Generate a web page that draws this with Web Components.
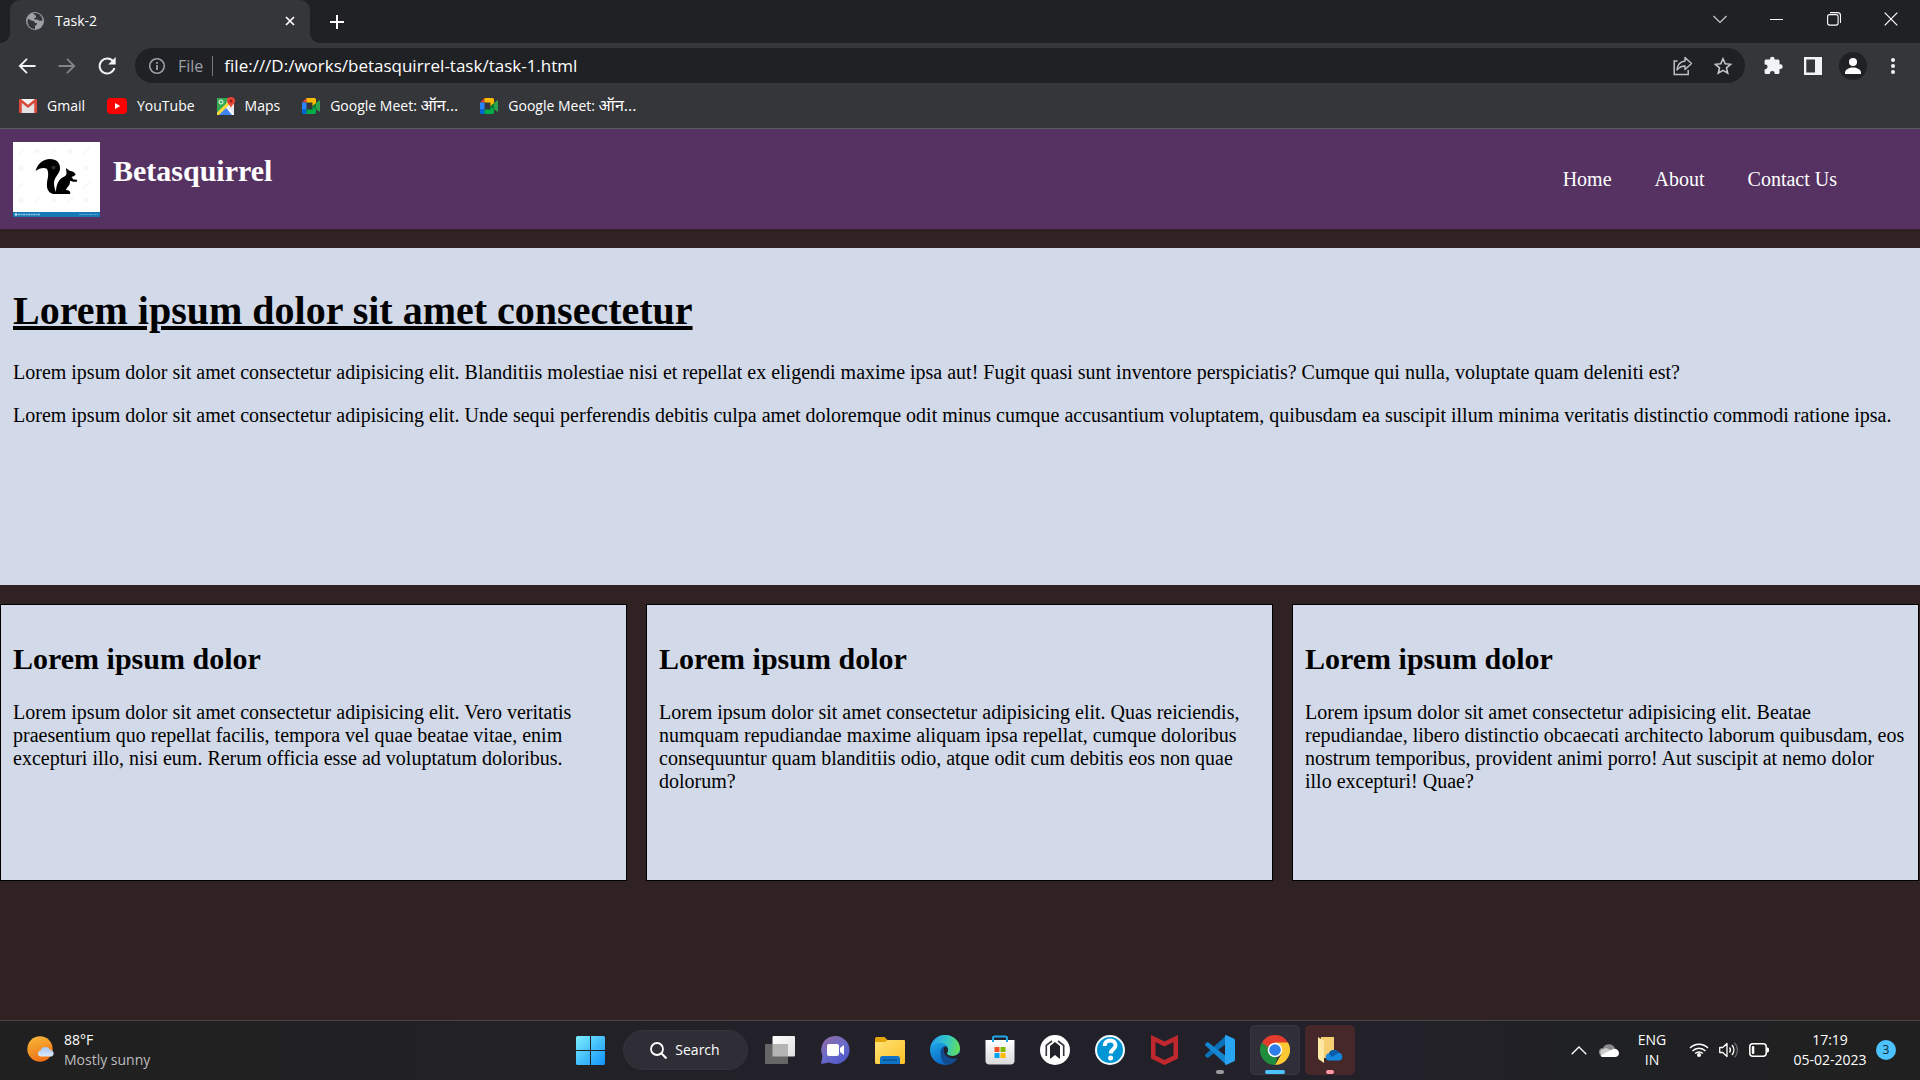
<!DOCTYPE html>
<html lang="en">
<head>
<meta charset="utf-8">
<title>Task-2</title>
<style>
  html, body { margin: 0; }
  body {
    min-height: 100vh;
    display: flex;
    flex-direction: column;
    background: #302222;
    color: #000;
    font: 20px/23px "Liberation Serif", "Times New Roman", serif;
    --ui: "Open Sans", "Noto Sans", sans-serif;
  }
  site-main { flex: 1; }
  [lang="hi"] { font-size: 16px; }
</style>
</head>
<body>
<browser-chrome>
  <browser-tab slot="tab">Task-2</browser-tab>
  <bookmark-link slot="bookmarks" icon="gmail">Gmail</bookmark-link>
  <bookmark-link slot="bookmarks" icon="youtube">YouTube</bookmark-link>
  <bookmark-link slot="bookmarks" icon="maps">Maps</bookmark-link>
  <bookmark-link slot="bookmarks" icon="meet">Google Meet: <span lang="hi">ऑन...</span></bookmark-link>
  <bookmark-link slot="bookmarks" icon="meet">Google Meet: <span lang="hi">ऑन...</span></bookmark-link>
</browser-chrome>
<site-header>Betasquirrel
  <nav-link slot="nav">Home</nav-link>
  <nav-link slot="nav">About</nav-link>
  <nav-link slot="nav">Contact Us</nav-link>
</site-header>
<site-main>
  <hero-panel slot="hero">
    <span slot="title">Lorem ipsum dolor sit amet consectetur</span>
    <p>Lorem ipsum dolor sit amet consectetur adipisicing elit. Blanditiis molestiae nisi et repellat ex eligendi maxime ipsa aut! Fugit quasi sunt inventore perspiciatis? Cumque qui nulla, voluptate quam deleniti est?</p>
    <p>Lorem ipsum dolor sit amet consectetur adipisicing elit. Unde sequi perferendis debitis culpa amet doloremque odit minus cumque accusantium voluptatem, quibusdam ea suscipit illum minima veritatis distinctio commodi ratione ipsa.</p>
  </hero-panel>
  <info-card><span slot="title">Lorem ipsum dolor</span>Lorem ipsum dolor sit amet consectetur adipisicing elit. Vero veritatis praesentium quo repellat facilis, tempora vel quae beatae vitae, enim excepturi illo, nisi eum. Rerum officia esse ad voluptatum doloribus.</info-card>
  <info-card><span slot="title">Lorem ipsum dolor</span>Lorem ipsum dolor sit amet consectetur adipisicing elit. Quas reiciendis, numquam repudiandae maxime aliquam ipsa repellat, cumque doloribus consequuntur quam blanditiis odio, atque odit cum debitis eos non quae dolorum?</info-card>
  <info-card><span slot="title">Lorem ipsum dolor</span>Lorem ipsum dolor sit amet consectetur adipisicing elit. Beatae repudiandae, libero distinctio obcaecati architecto laborum quibusdam, eos nostrum temporibus, provident animi porro! Aut suscipit at nemo dolor illo excepturi! Quae?</info-card>
</site-main>
<task-bar>
  <weather-widget slot="start"><span slot="temp">88°F</span>Mostly sunny</weather-widget>
  <task-button icon="windows" label="Start"></task-button>
  <search-pill>Search</search-pill>
  <task-button icon="taskview" label="Task view"></task-button>
  <task-button icon="chat" label="Chat"></task-button>
  <task-button icon="explorer" label="File Explorer"></task-button>
  <task-button icon="edge" label="Edge"></task-button>
  <task-button icon="store" label="Store"></task-button>
  <task-button icon="support" label="Support"></task-button>
  <task-button icon="help" label="Help"></task-button>
  <task-button icon="mcafee" label="McAfee"></task-button>
  <task-button icon="vscode" label="Code" state="running"></task-button>
  <task-button icon="chrome" label="Chrome" state="active"></task-button>
  <task-button icon="onedrive" label="OneDrive folder" state="alert"></task-button>
  <system-tray slot="end"></system-tray>
</task-bar>

<script>
const svg = (w, h, body, extra = '') =>
  `<svg width="${w}" height="${h}" viewBox="0 0 ${w} ${h}" fill="none" aria-hidden="true" ${extra}>${body}</svg>`;

const ICONS = {
  globe: svg(18, 18, '<circle cx="9" cy="9" r="9" fill="#9aa0a6"/><path d="M2 7c2 0 3 2 5 2s1 2 3 2 1 2-1 3v3C5 17 1.500 14 1.500 9z" fill="#35363a"/><path d="M7 1.500c1 1.500 3 1 3 3S8 6 8 7s3 0 4 1 3 1 4.500.5C16.500 4 13 1 9 1z" fill="#35363a"/>'),
  tabClose: svg(10, 10, '<path d="M1 1l8 8M9 1L1 9" stroke="#fff" stroke-width="1.700"/>'),
  plus: svg(14, 14, '<path d="M7 0v14M0 7h14" stroke="#fff" stroke-width="2"/>'),
  chevron: svg(14, 9, '<path d="M.5 1l6.500 6.500L13.500 1" stroke="#ccc" stroke-width="1.200"/>'),
  minimize: svg(13, 3, '<path d="M0 1.500h13" stroke="#fff"/>'),
  restore: svg(14, 14, '<rect x=".6" y="2.600" width="10.500" height="10.500" rx="2" stroke="#fff" stroke-width="1.100"/><path d="M3 .6h7.500a3 3 0 0 1 3 3V11" stroke="#fff" stroke-width="1.100"/>'),
  close: svg(14, 14, '<path d="M.7.7l12.600 12.600M13.300.7L.7 13.300" stroke="#fff" stroke-width="1.200"/>'),
  back: svg(18, 16, '<path d="M17.500 8H2M9 .8L1.800 8 9 15.200" stroke="#f1f3f4" stroke-width="1.800"/>'),
  forward: svg(18, 16, '<path d="M.5 8H16M9 .8L16.200 8 9 15.200" stroke="#838488" stroke-width="1.800"/>'),
  reload: svg(18, 18, '<path d="M15.300 4.700A7.500 7.500 0 1 0 16.400 11" stroke="#f1f3f4" stroke-width="2"/><path d="M17.700 0v7.500h-7.500z" fill="#f1f3f4"/>'),
  info: svg(18, 18, '<circle cx="9" cy="9" r="7.300" stroke="#9aa0a6" stroke-width="1.600"/><path d="M9 8v5M9 5v1.800" stroke="#9aa0a6" stroke-width="1.800"/>'),
  share: svg(20, 20, '<path d="M4.500 5H1.200v13.500h14V14" stroke="#bdc1c6" stroke-width="1.500"/><path d="M12 1.500l6.500 6-6.500 6v-3.500c-4 0-6 1.500-8 4 .5-5 3-8.500 8-9z" stroke="#bdc1c6" stroke-width="1.400" stroke-linejoin="round"/>'),
  star: svg(18, 18, '<path d="M9 1.800l2.200 5 5.400.5-4.100 3.600 1.200 5.300L9 13.400l-4.700 2.800 1.200-5.300L1.400 7.300l5.400-.5z" stroke="#c4c7cb" stroke-width="1.600"/>'),
  puzzle: svg(19, 19, '<path d="M6 3.500V3a2.300 2.300 0 0 1 4.600 0v.5h3.300c1 0 1.600.7 1.600 1.600v3.200h.8a2.400 2.400 0 0 1 0 4.800h-.8v3.300c0 .9-.7 1.600-1.600 1.600h-3.200v-.7a2.400 2.400 0 0 0-4.800 0v.7H2.200c-.9 0-1.600-.7-1.600-1.600v-3.200h.6a2.400 2.400 0 0 0 0-4.800H.6V5.100c0-.9.700-1.600 1.600-1.600z" fill="#f1f3f4"/>'),
  panel: svg(18, 18, '<path fill-rule="evenodd" d="M0 0h18v18H0zM2.300 2.500v13h8.700v-13z" fill="#f1f3f4"/>'),
  avatar: svg(28, 28, '<circle cx="14" cy="14" r="14" fill="#202124"/><circle cx="14" cy="10" r="4" fill="#fff"/><path d="M6 22v-1.500c0-3 4.500-5 8-5s8 2 8 5V22z" fill="#fff"/>'),
  dots: svg(4, 16, '<circle cx="2" cy="2" r="2" fill="#f1f3f4"/><circle cx="2" cy="8" r="2" fill="#f1f3f4"/><circle cx="2" cy="14" r="2" fill="#f1f3f4"/>'),

  gmail: svg(18, 18, '<path d="M1 2h16v14H1z" fill="#f2f2f2"/><path d="M3 16V6l6 5 6-5v10z" fill="#e3e3e3"/><path d="M0 3.200C0 2.500.6 2 1.300 2H2l7 5.700L16 2h.7c.7 0 1.300.5 1.300 1.200V15c0 .6-.4 1-1 1h-1.800V6L9 11 2.800 6v10H1c-.6 0-1-.4-1-1z" fill="#d94a3d"/>'),
  youtube: svg(20, 16, '<rect width="20" height="16" rx="4" fill="#f00"/><path d="M8 5l5.200 3L8 11z" fill="#fff"/>'),
  maps: svg(18, 18, '<rect y="1" width="17" height="17" rx="1" fill="#e8eaed"/><path d="M0 2a1 1 0 0 1 1-1h10L8.500 9 0 17z" fill="#34a853"/><path d="M9.500 9l7.500 8v1H0z" fill="#fff"/><path d="M8.500 10L1 18h14z" fill="#4285f4"/><path d="M0 15.500L12 4l2 2L2 18H0z" fill="#fbdc3e"/><circle cx="4" cy="5" r="2" stroke="#fff" stroke-width="1"/><path d="M14 0a4 4 0 0 1 4 4c0 2.700-3 3.500-4 7-1-3.500-4-4.300-4-7a4 4 0 0 1 4-4z" fill="#ea4335"/><circle cx="14" cy="4" r="1.500" fill="#8f1f18"/>'),
  meet: svg(18, 16, '<path d="M4.500 0v4.500H0z" fill="#ea4335"/><path d="M0 4.500h4.500v7H0z" fill="#2684fc"/><path d="M0 11.500h4.500V16H1.500A1.500 1.500 0 0 1 0 14.500z" fill="#0066da"/><path d="M4.500 0h8A1.500 1.500 0 0 1 14 1.500V6l-3.500 2.500v-4h-6z" fill="#ffba00"/><path d="M4.500 11.500h6v-3L14 11v3.500a1.500 1.500 0 0 1-1.500 1.500h-8z" fill="#00ac47"/><path d="M10.500 8L14 5v6z" fill="#00832d"/><path d="M14 5l3-2.500c.4-.3 1-.1 1 .5v10c0 .6-.6.8-1 .5L14 11z" fill="#2ba24c"/>'),

  squirrel: `<svg width="87" height="75" viewBox="0 0 87 75" role="img" aria-label="Betasquirrel logo"><rect width="87" height="75" fill="#fff"/>
    <g stroke="#f6f6f6" stroke-width="1.500"><path d="M5 12l7-6M37 12l7-6M70 12l7-6M5 46l7-6M70 46l7-6M21 61l7-6M54 61l7-6"/></g>
    <g fill="#f7f7f7"><circle cx="24" cy="9" r="2.500"/><circle cx="57" cy="9" r="2.500"/><circle cx="8" cy="26" r="2.500"/><circle cx="73" cy="26" r="2.500"/><circle cx="8" cy="58" r="2.500"/><circle cx="41" cy="58" r="2.500"/><circle cx="73" cy="58" r="2.500"/></g>
    <path d="M22.700 29C24 22 30 17 37 17c6.500 0 10.500 4 10 10-.4 5-6 8-6 14 0 3.500.8 6.300 2 9 0-6 2-12.500 7.500-15 2-1 3-2 3-4l-.5-5 3.500 2.700c3.200.3 5.500 1.800 6.200 4l-2.200 1.500-2 .8 2 2.500 3.800.3-.6 2h-3.500l-3.200-1c.3 3-1 5-3 7l-1 2.200c2 0 3.700.7 4.200 2v2H40c-5-1.500-6.500-5.500-6-11 .3-4 2.500-9 0-14-3-2-8-.5-11.300 2z" fill="#000"/><circle cx="40.500" cy="25.500" r="2" fill="#2c2c2c"/>
    <rect y="70" width="87" height="5" fill="#1579b5"/><circle cx="3" cy="72.500" r="1.300" fill="#cfe6f3"/><path d="M5 72.500h22" stroke="#8fc3df" stroke-width="1.500" stroke-dasharray="2 .5"/><path d="M66 72.500h19" stroke="#5ba5cd" stroke-dasharray="2 .5"/></svg>`,

  sun: svg(28, 28, '<defs><linearGradient id="s" x1="8" y1="0" x2="17" y2="26" gradientUnits="userSpaceOnUse"><stop stop-color="#f6b638"/><stop offset="1" stop-color="#ef6c13"/></linearGradient><linearGradient id="c" x1="0" y1="11" x2="0" y2="21" gradientUnits="userSpaceOnUse"><stop stop-color="#a9c8f5"/><stop offset="1" stop-color="#dce9fb"/></linearGradient></defs><circle cx="13" cy="13" r="12.700" fill="url(#s)"/><path d="M13.500 20.500a3.200 3.200 0 0 1 .2-6.300 5 5 0 0 1 9.300-.2 3.400 3.400 0 0 1 1.600 6.500z" fill="url(#c)"/>'),
  windows: svg(29, 29, '<defs><linearGradient id="w" x1="0" y1="0" x2="29" y2="29" gradientUnits="userSpaceOnUse"><stop stop-color="#7eefff"/><stop offset="1" stop-color="#0f92f8"/></linearGradient></defs><path d="M1.500 0H14v14H0V1.500A1.500 1.500 0 0 1 1.500 0zM15 0h12.500A1.500 1.500 0 0 1 29 1.500V14H15zM0 15h14v14H1.500A1.500 1.500 0 0 1 0 27.500zM15 15h14v12.500a1.500 1.500 0 0 1-1.500 1.500H15z" fill="url(#w)"/>'),
  search: svg(17, 17, '<circle cx="7" cy="7" r="6" stroke="#fff" stroke-width="1.800"/><path d="M11.500 11.500l5 5" stroke="#fff" stroke-width="2"/>'),
  taskview: svg(30, 28, '<defs><linearGradient id="t" x1="8" y1="0" x2="30" y2="20" gradientUnits="userSpaceOnUse"><stop stop-color="#fff"/><stop offset="1" stop-color="#dedede"/></linearGradient></defs><rect x="7.500" width="22.500" height="20.500" rx="1" fill="url(#t)"/><rect y="8" width="23" height="20" rx="1" fill="#666"/><path d="M7.500 8H22a1 1 0 0 1 1 1v11.500H7.500z" fill="#b4b4b4"/>'),
  chat: svg(30, 30, '<defs><linearGradient id="h" x1="5" y1="3" x2="22" y2="28" gradientUnits="userSpaceOnUse"><stop stop-color="#8f6aa8"/><stop offset=".5" stop-color="#6b6bc9"/><stop offset="1" stop-color="#5059c9"/></linearGradient></defs><path d="M15.500 1a14 14 0 1 1-6.300 26.500L1 29l1.500-8A14 14 0 0 1 15.500 1z" fill="url(#h)"/><rect x="7" y="9" width="12" height="12" rx="2" fill="#fff"/><path d="M20 13l4-3v10l-4-3z" fill="#fff"/>'),
  explorer: svg(30, 27, '<defs><linearGradient id="f" x1="5" y1="3" x2="25" y2="27" gradientUnits="userSpaceOnUse"><stop stop-color="#ffe06e"/><stop offset="1" stop-color="#fcc32e"/></linearGradient></defs><path d="M0 1.500A1.500 1.500 0 0 1 1.500 0h8L13 3.500V8H0z" fill="#e5a50a"/><path d="M0 5h10l2.500-2H29a1 1 0 0 1 1 1v21.500a1.500 1.500 0 0 1-1.500 1.500h-27A1.500 1.500 0 0 1 0 25.500z" fill="url(#f)"/><path d="M5 27v-5.500A2.500 2.500 0 0 1 7.500 19h15a2.500 2.500 0 0 1 2.500 2.500V27z" fill="#0f74c8"/><path d="M8 23h14" stroke="#064a85" stroke-width="1.200"/>'),
  edge: svg(30, 30, '<defs><linearGradient id="e1" x1="3" y1="8" x2="30" y2="14" gradientUnits="userSpaceOnUse"><stop stop-color="#27a5e8"/><stop offset=".5" stop-color="#36c8c4"/><stop offset="1" stop-color="#66e04f"/></linearGradient><linearGradient id="e2" x1="5" y1="9" x2="14" y2="30" gradientUnits="userSpaceOnUse"><stop stop-color="#1ba0e2"/><stop offset="1" stop-color="#0a64c4"/></linearGradient></defs><circle cx="15" cy="15" r="15" fill="url(#e2)"/><path d="M.5 12C2 5 8 0 15 0c9 0 15 6.500 15 13.500 0 4.500-3.500 7.500-7.500 7.500-3 0-5.500-1-5.500-2.500s1.300-2 1.300-4.200C18.300 11 14.500 8 10 8 5.500 8 2 9.500.5 12z" fill="url(#e1)"/><path d="M10.500 17c0-3.500 2.500-5.500 4.500-5.800-1 .8-1.500 2.200-1.500 3.800 0 5 5 8 9 8 2.500 0 4.300-.7 5.500-1.500C25.500 26.800 20.500 30 16 30c-3.500-2-5.500-8-5.500-13z" fill="#104c8f"/><path d="M18 15c0 2-1 2.500-1 3.500 0 1.500 2.500 2.500 5.500 2.500 3 0 5.500-1.300 7-3.500l.5 2.500-2 3c-7 2.500-14.500-2-14.500-8 0-1.500.7-3 1.500-3.800 1.700 0 3 1.800 3 3.800z" fill="#22212a"/>'),
  store: svg(30, 30, '<defs><linearGradient id="m" x1="0" y1="5" x2="0" y2="30" gradientUnits="userSpaceOnUse"><stop stop-color="#fff"/><stop offset="1" stop-color="#d9d9d9"/></linearGradient></defs><path d="M8 8V3a1.500 1.500 0 0 1 1.500-1.500h11A1.500 1.500 0 0 1 22 3v5" stroke="#20a9ea" stroke-width="2"/><path fill-rule="evenodd" d="M.5 5h29v20.500a4 4 0 0 1-4 4h-21a4 4 0 0 1-4-4z" fill="url(#m)"/><path d="M8 5v2M22 5v2" stroke="#20a9ea" stroke-width="2"/><path d="M9.500 12h5v5h-5z" fill="#f25022"/><path d="M15.500 12h5v5h-5z" fill="#7fba00"/><path d="M9.500 18h5v5h-5z" fill="#00a4ef"/><path d="M15.500 18h5v5h-5z" fill="#ffb900"/>'),
  support: svg(30, 30, '<circle cx="15" cy="15" r="15" fill="#fff"/><path d="M6.300 21V10.300L12 6M23.700 21V10.300L18 6" stroke="#33333a" stroke-width="1.600"/><path d="M10 24V11l5-4 5 4v13l-5-4z" fill="#22212a"/>'),
  help: svg(30, 30, '<circle cx="15" cy="15" r="14" fill="#0096d6" stroke="#f4fbff" stroke-width="2"/><path d="M9.700 11c0-3.400 2.300-5.500 5.400-5.500s5.400 2 5.400 4.800c0 4-4.700 4-4.700 8.200" stroke="#fff" stroke-width="4"/><circle cx="15.600" cy="23" r="2.500" fill="#fff"/>'),
  mcafee: svg(27, 30, '<path fill-rule="evenodd" d="M0 0l13.500 6.500L27 0v23.500L13.500 30 0 23.500zM4.500 7v13.500l9 4.500 9-4.500V7l-9 4.500z" fill="#c0282d"/>'),
  vscode: svg(30, 30, '<path d="M22 8L3.500 22.500c-.6.500-1.300.4-1.800 0L.4 21.200c-.5-.5-.5-1.300 0-1.800L21 .5z" fill="#0b70b8"/><path d="M22 22L3.500 7.500c-.6-.5-1.300-.4-1.800 0L.4 8.800c-.5.500-.5 1.300 0 1.800L21 29.500z" fill="#1685cf"/><path d="M21.500.2L28.700 3.500c.8.400 1.300 1.200 1.300 2v19c0 .8-.5 1.600-1.300 2l-7.200 3.300c-.7.300-1.500 0-1.500-.8V1c0-.8.800-1.100 1.500-.8z" fill="#27a5f2"/>'),
  chrome: svg(30, 30, '<path d="M15 15L2 7.500A15 15 0 0 1 28 7.500z" fill="#e33b2e"/><path d="M15 7.500h13A15 15 0 0 1 15 30l6.500-11.200z" fill="#fcc934"/><path d="M2 7.500l6.500 11.300 6.500 3.700 2.500 0L15 30A15 15 0 0 1 2 7.500z" fill="#1e8e3e"/><path d="M2 7.500h26l-13 0a7.500 7.500 0 0 0-6.500 11.300z" fill="#e33b2e"/><path d="M2 7.500l6.500 11.300L9 13z" fill="#1e8e3e"/><circle cx="15" cy="15" r="7.300" fill="#fff"/><circle cx="15" cy="15" r="5.800" fill="#2f7de9"/>'),
  onedrive: svg(26, 26, '<path d="M4 0h13v21H4z" fill="#f6cf72"/><path d="M1 0l6 4v22L2 22.500 1 21z" fill="#ffe7a6"/><path d="M11.500 23.500a3.500 3.500 0 0 1 .3-6.900 5.500 5.500 0 0 1 10-.8 4 4 0 0 1 1 7.700z" fill="#1287db"/><path d="M11.800 16.600a5.500 5.500 0 0 1 10-.8L15 20z" fill="#0b5cab"/>', 'overflow="visible"'),
  up: svg(16, 9, '<path d="M.7 8.300L8 1l7.300 7.300" stroke="#fff" stroke-width="1.300"/>'),
  cloud: svg(20, 13, '<path d="M4 12a4 4 0 0 1 0-8 6.500 6.500 0 0 1 12 .5A4 4 0 0 1 16.500 12z" fill="#8b8b8b"/><path d="M2 6l5-2 9 4-8 4H4a4 4 0 0 1-2-6z" fill="#ccc"/><path d="M1.500 11.500L13 5.500A4.500 4.500 0 0 1 20 9a4 4 0 0 1-3.500 4H4c-1.200 0-2-.5-2.500-1.500z" fill="#fff"/>'),
  wifi: svg(20, 16, '<circle cx="10" cy="13" r="2" fill="#fff"/><path d="M1 6a12.500 12.500 0 0 1 18 0M3.500 9a9 9 0 0 1 13 0M6.200 11.500a5.500 5.500 0 0 1 7.600 0" stroke="#fff" stroke-width="1.500"/>'),
  speaker: svg(20, 16, '<path d="M.7 5.500h3L8 1.500v13l-4.300-4h-3z" stroke="#fff" stroke-width="1.300" stroke-linejoin="round"/><path d="M10.500 5.500a4 4 0 0 1 0 5M13 3a7.500 7.500 0 0 1 0 10" stroke="#fff" stroke-width="1.300"/><path d="M15.500.7a10.500 10.500 0 0 1 0 14.600" stroke="#666" stroke-width="1.300"/>'),
  battery: svg(20, 14, '<rect x=".8" y=".8" width="16.400" height="12.400" rx="3" stroke="#fff" stroke-width="1.500"/><path d="M18 4.500c1.300 0 2 .6 2 1.500v2c0 .9-.7 1.500-2 1.500z" fill="#fff"/><rect x="2.800" y="3" width="2.500" height="8" rx="1" fill="#fff"/>')
};

const RESET = `
  button, input { all: unset; box-sizing: border-box; }
  a { color: inherit; text-decoration: none; }
  button { display: grid; place-items: center; cursor: default; }
  svg { display: block; }`;

function define(name, render) {
  customElements.define(name, class extends HTMLElement {
    constructor() {
      super();
      const t = document.createElement('template');
      t.innerHTML = `<style>${RESET}</style>` + render(this);
      this.attachShadow({ mode: 'open' }).append(t.content.cloneNode(true));
    }
  });
}

define('browser-chrome', () => `
  <style>
    :host { display: block; background: #35363a; border-bottom: 1px solid #5b5c60; font: 14px/20px var(--ui); color: #fff; }
    .strip { display: flex; align-items: stretch; height: 43px; background: #202124; padding-left: 10px; }
    .new { width: 54px; }
    .win { display: flex; margin-left: auto; padding: 0 1px 5px 0; }
    .win button { width: 57px; }
    .tools { display: flex; align-items: center; height: 45px; padding: 0 7px; }
    .nav { width: 40px; height: 40px; }
    .omni { flex: 1; display: flex; align-items: center; height: 35px; margin: 0 8px 0 8px; padding: 0 13px; border-radius: 18px; background: #202124; }
    .scheme { font-size: 16px; color: #9aa0a6; padding: 0 9px 0 12px; border-right: 1px solid #777a7e; }
    .omni input { flex: 1; margin-left: 11px; font-size: 17px; line-height: 24px; color: #fff; }
    .omni button { width: 40px; }
    .omni button:last-child { margin-right: -11px; }
    .ext { width: 40px; height: 36px; }
    .marks { display: flex; align-items: center; gap: 22px; height: 40px; box-sizing: border-box; padding: 0 19px 5px; }
  </style>
  <div class="strip">
    <slot name="tab"></slot>
    <button class="new" aria-label="New tab">${ICONS.plus}</button>
    <div class="win">
      <button aria-label="Search tabs">${ICONS.chevron}</button>
      <button aria-label="Minimize">${ICONS.minimize}</button>
      <button aria-label="Restore">${ICONS.restore}</button>
      <button aria-label="Close">${ICONS.close}</button>
    </div>
  </div>
  <div class="tools">
    <button class="nav" aria-label="Back">${ICONS.back}</button>
    <button class="nav" aria-label="Forward">${ICONS.forward}</button>
    <button class="nav" aria-label="Reload">${ICONS.reload}</button>
    <div class="omni">
      ${ICONS.info}
      <label class="scheme" for="url">File</label>
      <input id="url" type="text" value="file:///D:/works/betasquirrel-task/task-1.html">
      <button aria-label="Share">${ICONS.share}</button>
      <button aria-label="Bookmark">${ICONS.star}</button>
    </div>
    <button class="ext" aria-label="Extensions">${ICONS.puzzle}</button>
    <button class="ext" aria-label="Side panel">${ICONS.panel}</button>
    <button class="ext" aria-label="Profile">${ICONS.avatar}</button>
    <button class="ext" aria-label="Menu">${ICONS.dots}</button>
  </div>
  <div class="marks"><slot name="bookmarks"></slot></div>`);

define('browser-tab', () => `
  <style>
    :host { position: relative; display: flex; align-items: center; gap: 11px; box-sizing: border-box; width: 300px; padding: 0 15px 1px 16px; border-radius: 10px 10px 0 0; background: #35363a; }
    :host::before, :host::after { content: ""; position: absolute; bottom: 0; width: 10px; height: 10px; }
    :host::before { right: 100%; background: radial-gradient(circle at 0 0, transparent 10px, #35363a 10px); }
    :host::after { left: 100%; background: radial-gradient(circle at 100% 0, transparent 10px, #35363a 10px); }
    button { margin-left: auto; }
  </style>
  ${ICONS.globe}<span><slot></slot></span><button aria-label="Close tab">${ICONS.tabClose}</button>`);

define('bookmark-link', el => `
  <style>
    :host { display: block; }
    a { display: flex; align-items: center; gap: 10px; white-space: nowrap; }
  </style>
  <a href="#">${ICONS[el.getAttribute('icon')]}<span><slot></slot></span></a>`);

define('site-header', () => `
  <style>
    :host { display: flex; align-items: flex-start; gap: 13px; height: 100px; box-sizing: border-box; padding: 13px 83px 12px 13px; background: #553261; color: #fff; }
    h2 { margin: 12px 0 0; font-size: 30px; line-height: 34px; }
    nav { display: flex; align-self: center; gap: 43px; margin-left: auto; }
  </style>
  ${ICONS.squirrel}
  <h2><slot></slot></h2>
  <nav><slot name="nav"></slot></nav>`);

define('nav-link', () => `
  <style>:host { display: block; }</style>
  <a href="#"><slot></slot></a>`);

define('site-main', () => `
  <style>
    :host { display: block; padding-top: 19px; }
    .cards { display: grid; grid-template-columns: repeat(3, 1fr); gap: 19px; padding: 19px 1px 19px 0; }
  </style>
  <slot name="hero"></slot>
  <div class="cards"><slot></slot></div>`);

define('hero-panel', () => `
  <style>
    :host { display: flow-root; box-sizing: border-box; min-height: 337px; padding: 13px; background: #d2d9e8; }
    h1 { margin: 27px 0; font-size: 40px; line-height: 46px; text-decoration: underline; }
    ::slotted(p) { margin: 0 0 20px; }
  </style>
  <h1><slot name="title"></slot></h1>
  <slot></slot>`);

define('info-card', () => `
  <style>
    :host { display: block; box-sizing: border-box; min-height: 277px; padding: 12px 13px 12px 12px; border: 1px solid #000; background: #d2d9e8; }
    h2 { margin: 25px 0; font-size: 30px; line-height: 34px; }
    p { margin: 0; }
  </style>
  <h2><slot name="title"></slot></h2>
  <p><slot></slot></p>`);

define('task-bar', () => `
  <style>
    :host { display: grid; grid-template-columns: 1fr auto 1fr; align-items: center; height: 60px; box-sizing: border-box; padding-bottom: 1px; border-top: 1px solid #4a4648; background: linear-gradient(90deg, #202020, #222124 25%, #22212a 42%, #22212a 72%, #202124 82%, #202020); color: #fff; font: 14px/20px var(--ui); }
    .apps { display: flex; align-items: center; gap: 5px; }
    .end { justify-self: end; }
  </style>
  <div><slot name="start"></slot></div>
  <div class="apps"><slot></slot></div>
  <div class="end"><slot name="end"></slot></div>`);

define('weather-widget', () => `
  <style>
    :host { display: flex; align-items: center; gap: 9px; padding-left: 27px; }
    .desc { color: #bdbdbd; }
  </style>
  ${ICONS.sun}
  <div><div><slot name="temp"></slot></div><div class="desc"><slot></slot></div></div>`);

define('search-pill', () => `
  <style>
    :host { display: block; }
    button { display: flex; align-items: center; justify-content: center; gap: 8px; width: 125px; height: 40px; border-radius: 20px; border: 1px solid #35343c; background: #2f2e36; margin: 0 2px; }
  </style>
  <button>${ICONS.search}<slot></slot></button>`);

define('task-button', el => `
  <style>
    :host { display: block; }
    button { position: relative; width: 50px; height: 50px; border-radius: 5px; }
    :host([state="active"]) button { background: #302f39; box-shadow: inset 0 0 0 1px #373640; }
    :host([state="alert"]) button { background: #46282b; }
    :host([state]) button::after { content: ""; position: absolute; bottom: 1px; left: 21px; width: 8px; height: 4px; border-radius: 2px; background: #9b9b9f; }
    :host([state="active"]) button::after { left: 15px; width: 20px; background: #4cc2ff; }
    :host([state="alert"]) button::after { background: #ff99a4; }
  </style>
  <button aria-label="${el.getAttribute('label')}">${ICONS[el.getAttribute('icon')]}</button>`);

define('system-tray', () => `
  <style>
    :host { display: flex; align-items: center; padding-right: 24px; }
    .lang { width: 30px; margin: 0 22px 0 18px; text-align: center; }
    .status { display: flex; align-items: center; gap: 10px; }
    .clock { width: 78px; margin: 0 7px 0 22px; text-align: right; white-space: nowrap; }
    .lang, .clock { display: block; }
    .badge { width: 20px; height: 20px; border-radius: 10px; background: #4cc2ff; color: #10222c; font-size: 12px; line-height: 20px; text-align: center; }
    .up { margin-right: 12px; }
  </style>
  <button class="up" aria-label="Hidden icons">${ICONS.up}</button>
  ${ICONS.cloud}
  <button class="lang"><div>ENG</div><div>IN</div></button>
  <button class="status" aria-label="Network, volume, battery">${ICONS.wifi}${ICONS.speaker}${ICONS.battery}</button>
  <button class="clock"><div>17:19</div><div>05-02-2023</div></button>
  <div class="badge">3</div>`);
</script>
</body>
</html>
